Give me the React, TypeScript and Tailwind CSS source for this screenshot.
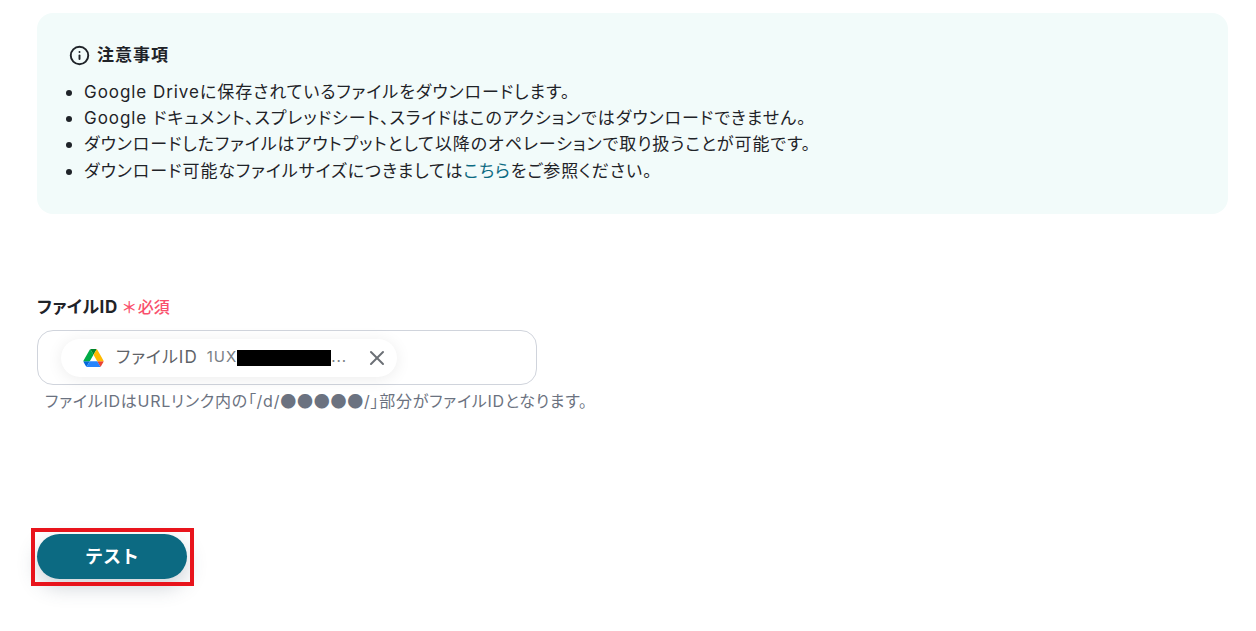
import { Info, X } from "lucide-react";

const notes = [
  <>Google Driveに保存されているファイルをダウンロードします。</>,
  <>Google ドキュメント、スプレッドシート、スライドはこのアクションではダウンロードできません。</>,
  <>ダウンロードしたファイルはアウトプットとして以降のオペレーションで取り扱うことが可能です。</>,
  <>
    ダウンロード可能なファイルサイズにつきましては<a href="#" className="text-[#0c6a82]">こちら</a>をご参照ください。
  </>,
];

function DriveIcon() {
  return (
    <svg viewBox="0 0 87.3 78" className="h-[18px] w-[21px]">
      <path d="m6.6 66.85 3.85 6.65c.8 1.4 1.95 2.5 3.3 3.3l13.75-23.8h-27.5c0 1.55.4 3.1 1.2 4.5z" fill="#0066da" />
      <path d="m43.65 25-13.75-23.8c-1.35.8-2.5 1.9-3.3 3.3l-25.4 44a9.06 9.06 0 0 0 -1.2 4.5h27.5z" fill="#00ac47" />
      <path d="m73.55 76.8c1.35-.8 2.5-1.9 3.3-3.3l1.6-2.75 7.65-13.25c.8-1.4 1.2-2.95 1.2-4.5h-27.5l5.85 11.5z" fill="#ea4335" />
      <path d="m43.65 25 13.75-23.8c-1.35-.8-2.9-1.2-4.5-1.2h-18.5c-1.6 0-3.15.45-4.5 1.2z" fill="#00832d" />
      <path d="m59.8 53h-32.3l-13.75 23.8c1.35.8 2.9 1.2 4.5 1.2h50.8c1.6 0 3.15-.45 4.5-1.2z" fill="#2684fc" />
      <path d="m73.4 26.5-12.7-22c-.8-1.4-1.95-2.5-3.3-3.3l-13.75 23.8 16.15 28h27.45c0-1.55-.4-3.1-1.2-4.5z" fill="#ffba00" />
    </svg>
  );
}

export default function App() {
  return (
    <div className="min-h-[631px] bg-white pl-[37px] pr-[28px] pt-[13px] font-['Inter','Noto_Sans_CJK_JP',sans-serif] text-[#1f2328] [font-feature-settings:'palt']">
      <div className="h-[201px] rounded-2xl bg-[#f2fbfa] pl-[32px] pt-[30px]">
        <div className="flex items-center gap-[7px] text-[17px] font-bold leading-[24px] tracking-[1px]">
          <Info className="h-[21px] w-[21px]" strokeWidth={2.2} />
          <span>注意事項</span>
        </div>
        <ul className="mt-[12.5px] -ml-[3px] text-[17px] tracking-[0.95px]">
          {notes.map((n, i) => (
            <li key={i} className="flex h-[26.3px] items-center gap-[12px]">
              <span className="h-[6px] w-[6px] rounded-full bg-[#1f2328]" />
              <span>{n}</span>
            </li>
          ))}
        </ul>
      </div>

      <div className="mt-[81px] flex items-center leading-[24px]">
        <span className="text-[17px] font-bold tracking-[0.5px]">ファイルID</span>
        <span className="ml-[5px] text-[16px] font-medium text-[#f9506c]">＊</span>
        <span className="ml-[2px] text-[16px] font-medium text-[#f9506c]">必須</span>
      </div>

      <div className="mt-[11px] flex h-[55px] w-[500px] items-center rounded-2xl border border-[#d0d4dc] pl-[23px]">
        <div className="flex h-[38px] w-[336px] items-center rounded-full bg-white pl-[22px] shadow-[0_2px_16px_rgba(0,0,0,0.08)]">
          <DriveIcon />
          <span className="ml-[12px] text-[17px] tracking-[1px] text-[#5f6368]">ファイルID</span>
          <span className="ml-[9px] flex items-center text-[15px] tracking-[1px] text-[#7a7f86]">
            1UX<span className="h-[16px] w-[94px] bg-black" />...
          </span>
          <X className="ml-[18px] h-[24px] w-[24px] text-[#6b6f75]" strokeWidth={2} />
        </div>
      </div>

      <p className="mt-[4px] pl-[8px] text-[16px] leading-[22px] tracking-[0.75px] text-[#6b7280]">
        ファイルIDはURLリンク内の「/d/<span className="font-['Noto_Sans_CJK_JP',sans-serif]">●●●●●</span>/」部分がファイルIDとなります。
      </p>

      <div className="relative mt-[122px] w-[150px]">
        <button className="block h-[45px] w-[150px] rounded-full bg-[#0c6a82] text-[18px] font-bold text-white shadow-[0_8px_20px_rgba(60,80,100,0.25)] [font-feature-settings:normal]">
          テスト
        </button>
        <div className="absolute -bottom-[7px] -left-[6px] -right-[7px] -top-[6px] border-4 border-[#e8141c]" />
      </div>
    </div>
  );
}
